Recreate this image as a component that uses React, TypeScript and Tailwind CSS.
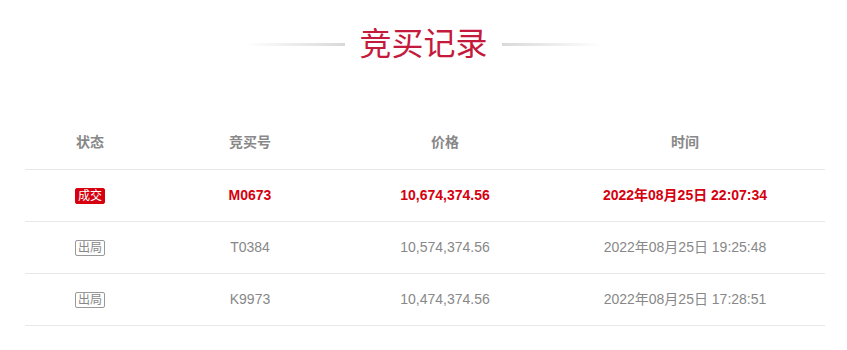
const ROWS = [
  { status: "成交", no: "M0673", price: "10,674,374.56", time: "2022年08月25日 22:07:34", win: true },
  { status: "出局", no: "T0384", price: "10,574,374.56", time: "2022年08月25日 19:25:48", win: false },
  { status: "出局", no: "K9973", price: "10,474,374.56", time: "2022年08月25日 17:28:51", win: false },
];

const FONT = { fontFamily: '"Microsoft YaHei", Arial, "Liberation Sans", "Noto Sans CJK SC", sans-serif' };

export default function App() {
  return (
    <div className="h-[350px] w-[847px] bg-white" style={FONT}>
      <div className="flex items-center justify-center pt-[24px]">
        <span className="h-[3px] w-[100px] bg-gradient-to-r from-white to-[#d9d9d9]" />
        <h2 className="mx-[14px] text-[32px] leading-[40px] text-[#c41a3b]">竞买记录</h2>
        <span className="h-[3px] w-[100px] bg-gradient-to-l from-white to-[#d9d9d9]" />
      </div>

      <table className="mx-[25px] mt-[53px] w-[800px] border-collapse text-center text-[14px]">
        <colgroup>
          <col className="w-[130px]" />
          <col className="w-[190px]" />
          <col className="w-[200px]" />
          <col className="w-[280px]" />
        </colgroup>
        <thead>
          <tr className="h-[52px] border-b border-[#e8e8e8] font-bold text-[#888]">
            <th>状态</th>
            <th>竞买号</th>
            <th>价格</th>
            <th>时间</th>
          </tr>
        </thead>
        <tbody>
          {ROWS.map((r) => (
            <tr
              key={r.no}
              className={`h-[52px] border-b border-[#e8e8e8] ${r.win ? "font-bold text-[#d6000f]" : "text-[#888]"}`}
            >
              <td>
                <span
                  className={`inline-block rounded-[2px] px-[2px] text-[12px] font-normal leading-[14px] ${
                    r.win ? "border border-[#d6000f] bg-[#d6000f] text-white" : "border border-[#999] text-[#888]"
                  }`}
                >
                  {r.status}
                </span>
              </td>
              <td>{r.no}</td>
              <td>{r.price}</td>
              <td>{r.time}</td>
            </tr>
          ))}
        </tbody>
      </table>
    </div>
  );
}
